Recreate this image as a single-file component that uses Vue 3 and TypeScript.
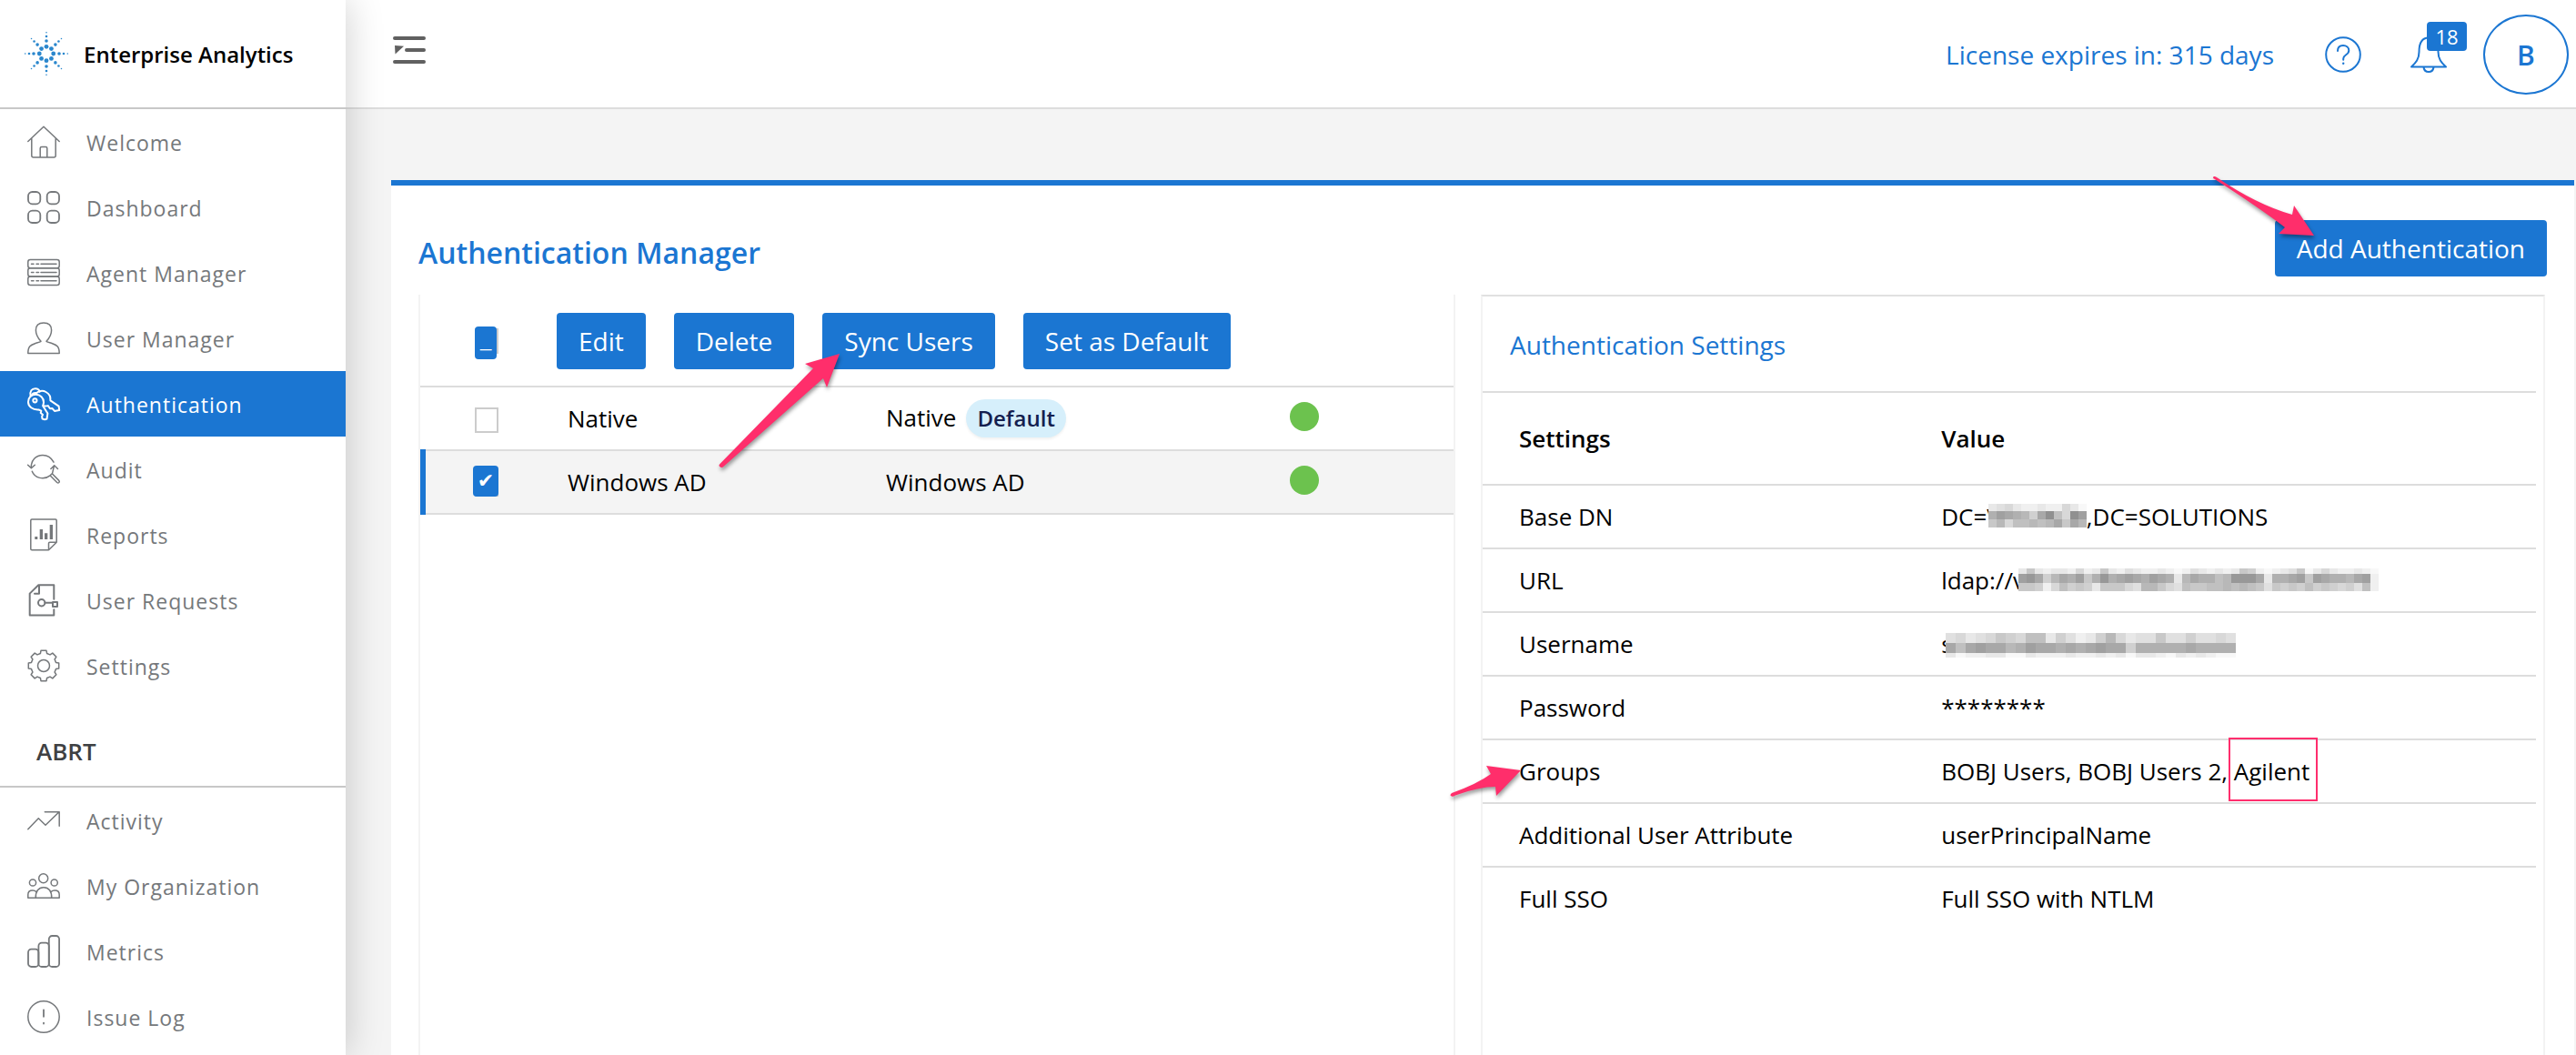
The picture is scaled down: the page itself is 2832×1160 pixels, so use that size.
<script setup lang="ts">
import { ref } from 'vue'

interface NavItem {
  label: string
  icon: string
}

interface Provider {
  name: string
  type: string
  isDefault: boolean
  selected: boolean
}

interface Mosaic {
  cell: number
  heights: number[]
  rows: string[]
}

interface Setting {
  label: string
  before?: string
  mosaic?: string
  after?: string
  highlight?: string
}

function gearPath(): string {
  const points: string[] = []
  for (let k = 0; k < 8; k++) {
    const steps: [number, number][] = [[-15, 14], [-10, 17], [10, 17], [15, 14]]
    for (const [offset, radius] of steps) {
      const angle = ((k * 45 + offset) * Math.PI) / 180
      points.push(`${(18 + radius * Math.sin(angle)).toFixed(1)} ${(18 - radius * Math.cos(angle)).toFixed(1)}`)
    }
  }
  return `M${points.join('L')}Z`
}

const mainNav: NavItem[] = [
  {
    label: 'Welcome',
    icon: '<path d="M.8 17.5 18 1.2l17.2 16.3M4.8 14v19q0 2 2 2h22.4q2 0 2-2V14M14.2 35V25q0-1.600 1.600-1.600h4.400q1.600 0 1.600 1.600v10"/>',
  },
  {
    label: 'Dashboard',
    icon: '<g stroke-width="1.800"><rect x="1" y="1" width="13.300" height="13.300" rx="4.500"/><rect x="21.700" y="1" width="13.300" height="13.300" rx="4.500"/><rect x="1" y="21.700" width="13.300" height="13.300" rx="4.500"/><rect x="21.700" y="21.700" width="13.300" height="13.300" rx="4.500"/></g>',
  },
  {
    label: 'Agent Manager',
    icon: '<rect x=".8" y="3.500" width="34.400" height="9.300" rx="2.500"/><rect x=".8" y="12.800" width="34.400" height="9.300" rx="2.500"/><rect x=".8" y="22.100" width="34.400" height="9.300" rx="2.500"/><path d="M4.500 8.300h2.500M10 8.300h2.500M15 8.300h17M4.500 17.600h2.500M10 17.600h2.500M15 17.600h17M4.500 26.700h2.500M10 26.700h2.500M15 26.700h17"/>',
  },
  {
    label: 'User Manager',
    icon: '<path d="M.8 34.600C.8 27 3 25.600 9 23.500c3.500-1.100 5-1.500 6-2.200C11 17 9.400 13 9.400 9 9.400 3.700 13 1 18 1s8.600 2.700 8.600 8c0 4-1.600 8-5.600 12.300 1 .7 2.500 1.100 6 2.200 6 2.100 8.200 3.500 8.200 11.100z"/>',
  },
  {
    label: 'Authentication',
    icon: '<g stroke-width="2"><path d="M3.600 9.500C2.500 4 5 1.200 8.700 1.200c2.800 0 4.600 1.600 4.800 3.600"/><path d="M5 8.200c1-2.300 3-2.500 5-2.200"/><path d="M12.500 24.500C6 25 1 21 1 16S4.500 7.800 9.300 7.800c5 0 8.700 3.700 8.700 8.400 0 1.700-.4 2.800-.9 4l5.300 8.300-.9 6.200q-2.500 1.300-5-.4l-.4-2.400 1-2-2.400-2 .6-2.200z"/><circle cx="8.400" cy="14.300" r="2.100"/><path d="M9.700 6.600C12 3.700 17 3 20.500 5c4 2.200 5.300 6 4.900 9.300l9.200 6.300.6 4.500-5.200.8-2.600-2.900-2.400.3-2.200-3.200q-2.500.8-5 .1"/></g>',
  },
  {
    label: 'Audit',
    icon: '<path d="M4.300 16.500C4 8 9.500 2.500 17 2.500c5.500 0 9.500 3 12 7.700M.6 13.200l3.800 3.600 3.900-3.600M5.300 20.300C8 27.500 18 30.500 25 24.800l2.500-2.200 2-8.500M25.900 17.500l3.800-3.700 3.800 3.700M25 24.800l7.700 7.700q1.200.9 2.100 0 .9-1.100 0-2.100l-7.500-7.600z"/>',
  },
  {
    label: 'Reports',
    icon: '<path d="M23.500 34.700H5q-1.200 0-1.200-1.200V2.200Q3.800 1 5 1h26q1.200 0 1.200 1.200v24l-8.700 8.500v-7.300q0-1.200 1.200-1.200h7.500"/><path class="solid" d="M8.300 20h3v3h-3zM13.700 12H17v11h-3.300zM19 16.300h3.300V23H19zM24.700 7H28v16h-3.300z"/>',
  },
  {
    label: 'User Requests',
    icon: '<g stroke-width="2"><path d="M29.300 16.700V1.200h-17L2.700 10.600v24h26.600v-6.300M13 1.500v9.200H8"/><circle cx="15.700" cy="20.700" r="3.700"/><path d="M19.500 20.700H28M28 20h5v5h-5z"/></g>',
  },
  {
    label: 'Settings',
    icon: `<path d="${gearPath()}"/><circle cx="18" cy="18" r="6.500"/>`,
  },
]

const orgNav: NavItem[] = [
  { label: 'Activity', icon: '<path d="M.8 27.700 12.300 15.800l7.700 7.500L35 8.800M19.300 8.700h15.900v15.600"/>' },
  {
    label: 'My Organization',
    icon: '<circle cx="17.700" cy="9.700" r="5"/><circle cx="6" cy="14.500" r="3.600"/><circle cx="29.700" cy="14.500" r="3.600"/><path d="M.8 31.200h34.400v-3.500c0-3-2-4.700-5-4.700-2 0-3 .4-4.200 1.700M.8 31.200v-3.500c0-3 2-4.700 5-4.700 2 0 3 .4 4.200 1.700M9.300 31.200c-.3-7.200 3-11.500 8.700-11.500s9 4.300 8.700 11.500"/>',
  },
  {
    label: 'Metrics',
    icon: '<g stroke-width="1.800"><rect x="1" y="15.700" width="11.400" height="19.300" rx="3.500"/><rect x="12.400" y="8.700" width="11.400" height="26.300" rx="3.500"/><rect x="23.800" y="1" width="11.300" height="34" rx="3.500"/></g>',
  },
  {
    label: 'Issue Log',
    icon: '<circle cx="18" cy="18" r="17.200"/><path stroke-width="1.800" d="M18 10.300v7.500M18 24.600v1"/>',
  },
]

const activeItem = ref('Authentication')

const logoDots = Array.from({ length: 8 }, (_, arm) => arm * (Math.PI / 4)).flatMap((angle) =>
  [[7.7, 2.4], [14, 1.8], [19, 1.3], [23.3, 0.8]].map(([distance, r]) => ({
    cx: 25 + distance * Math.cos(angle),
    cy: 25 + distance * Math.sin(angle),
    r,
  })),
)

const providers = ref<Provider[]>([
  { name: 'Native', type: 'Native', isDefault: true, selected: false },
  { name: 'Windows AD', type: 'Windows AD', isDefault: false, selected: true },
])

// Each hex digit is one tile's grey level, from dark (0) to nearly white (f).
const mosaics: Record<string, Mosaic> = {
  domain: {
    cell: 9,
    heights: [8, 9, 9],
    rows: ['dcbdeedeebdf', '64567a528b24', '97b887875957'],
  },
  host: {
    cell: 9,
    heights: [6, 10, 9],
    rows: [
      'd9deddebed9decdeedefecdeded9aefedc9fdbdeedef',
      '435a756496365456456d7566873335d665494566754e',
      '99aeb8a9ad999bc779bc8998878789c9a9a8a9abac8e',
    ],
  },
  account: {
    cell: 11,
    heights: [11, 11, 5],
    rows: ['cbdcb9ab88daceda7bdcc9ccaccbc', '585455764556565455a6666656666', 'dfeeddffdeeedeededfddefdedeff'],
  },
}

function shade(digit: string): string {
  const level = 128 + parseInt(digit, 16) * 8
  return `rgb(${level},${level},${level})`
}

function rowTop(mosaic: Mosaic, row: number): number {
  return mosaic.heights.slice(0, row).reduce((sum, h) => sum + h, 0)
}

const settings: Setting[] = [
  { label: 'Base DN', before: 'DC=V', mosaic: 'domain', after: ',DC=SOLUTIONS' },
  { label: 'URL', before: 'ldap://v', mosaic: 'host' },
  { label: 'Username', before: 's', mosaic: 'account' },
  { label: 'Password', before: '********' },
  { label: 'Groups', before: 'BOBJ Users, BOBJ Users 2, ', highlight: 'Agilent' },
  { label: 'Additional User Attribute', before: 'userPrincipalName' },
  { label: 'Full SSO', before: 'Full SSO with NTLM' },
]
</script>

<template>
  <div class="app">
    <aside class="sidebar">
      <div class="brand">
        <svg class="logo" viewBox="0 0 50 50" aria-hidden="true">
          <circle v-for="(dot, i) in logoDots" :key="i" :cx="dot.cx" :cy="dot.cy" :r="dot.r" />
        </svg>
        <span>Enterprise Analytics</span>
      </div>
      <nav>
        <a
          v-for="item in mainNav"
          :key="item.label"
          href="#"
          class="nav-item"
          :class="{ active: item.label === activeItem }"
          @click.prevent="activeItem = item.label"
        >
          <svg class="nav-icon" viewBox="0 0 36 36" aria-hidden="true" v-html="item.icon"></svg>
          <span class="nav-label">{{ item.label }}</span>
        </a>
      </nav>
      <h2 class="nav-heading">ABRT</h2>
      <nav>
        <a
          v-for="item in orgNav"
          :key="item.label"
          href="#"
          class="nav-item"
          :class="{ active: item.label === activeItem }"
          @click.prevent="activeItem = item.label"
        >
          <svg class="nav-icon" viewBox="0 0 36 36" aria-hidden="true" v-html="item.icon"></svg>
          <span class="nav-label">{{ item.label }}</span>
        </a>
      </nav>
    </aside>

    <div class="page">
      <header class="topbar">
        <button class="icon-button menu" type="button" aria-label="Toggle menu">
          <svg viewBox="0 0 36 32" width="36" height="32">
            <path d="M2 2h32M15 15h19M2 28h32" />
            <path class="solid" d="M2 10l10 .700L2.500 19.500z" />
          </svg>
        </button>
        <div class="topbar-right">
          <span class="license">License expires in: 315 days</span>
          <button class="icon-button" type="button" aria-label="Help">
            <svg viewBox="0 0 40 40" width="40" height="40">
              <circle cx="20" cy="20" r="18.800" />
              <path d="M14 16c0-4 2.500-6 6-6s6.300 2.300 6.300 5.500c0 5-6.100 4.500-6.100 9v1.300" />
              <circle class="solid" cx="20.200" cy="29.800" r="1.200" />
            </svg>
          </button>
          <button class="icon-button bell" type="button" aria-label="Notifications">
            <svg viewBox="0 0 40 40" width="40" height="40">
              <path d="M1 33.500C6 29 9.500 25 9.500 17 9.500 8 12 1.500 20 1.500S30.500 8 30.500 17c0 8 3.500 12 8.500 16.500zM14.500 34c.5 3.500 2.500 5 5.500 5s5-1.500 5.500-5" />
            </svg>
            <span class="badge">18</span>
          </button>
          <button class="avatar" type="button" aria-label="Account">B</button>
        </div>
      </header>

      <main class="card">
        <div class="card-head">
          <h1>Authentication Manager</h1>
          <div class="anchor">
            <button class="btn" type="button">Add Authentication</button>
            <svg class="arrow arrow-add" viewBox="0 0 116 74" aria-hidden="true">
              <path d="M3 4.500Q1 3 3 2Q4 1.500 6 3Q50 33 89 44L91 34 113 67 74 65 81 58Q55 38 3 4.500z" />
            </svg>
          </div>
        </div>

        <div class="panels">
          <section class="panel">
            <table class="providers">
              <colgroup>
                <col class="col-check" />
                <col class="col-name" />
                <col />
                <col class="col-status" />
              </colgroup>
              <thead>
                <tr>
                  <th class="check-cell">
                    <input type="checkbox" class="check" aria-label="Select all" :indeterminate.prop="true" />
                  </th>
                  <th colspan="3">
                    <div class="toolbar">
                      <button class="btn" type="button">Edit</button>
                      <button class="btn" type="button">Delete</button>
                      <div class="anchor">
                        <button class="btn" type="button">Sync Users</button>
                        <svg class="arrow arrow-sync" viewBox="0 0 142 132" aria-hidden="true">
                          <path d="M4 127.500Q1 126 4 123.500L106 19 97 14 135 3 121 40 117 30 8 126.500Q5.500 129 4 127.500z" />
                        </svg>
                      </div>
                      <button class="btn" type="button">Set as Default</button>
                    </div>
                  </th>
                </tr>
              </thead>
              <tbody>
                <tr v-for="provider in providers" :key="provider.name" :class="{ selected: provider.selected }">
                  <td class="check-cell">
                    <input v-model="provider.selected" type="checkbox" class="check" :aria-label="provider.name" />
                  </td>
                  <td>{{ provider.name }}</td>
                  <td>
                    {{ provider.type }}<span v-if="provider.isDefault" class="pill">Default</span>
                  </td>
                  <td><span class="status" role="img" aria-label="Enabled"></span></td>
                </tr>
              </tbody>
            </table>
          </section>

          <section class="panel details">
            <h2 class="details-title">Authentication Settings</h2>
            <table class="settings">
              <thead>
                <tr>
                  <th class="setting-name">Settings</th>
                  <th>Value</th>
                </tr>
              </thead>
              <tbody>
                <tr v-for="setting in settings" :key="setting.label">
                  <td>
                    <span class="anchor">
                      {{ setting.label }}
                      <svg v-if="setting.highlight" class="arrow arrow-groups" viewBox="0 0 86 42" aria-hidden="true">
                        <path d="M4 37.500Q1 36.500 4 34Q32 24 47 13L42 4 80 9 53 37 52 27Q34 27 8 36.500Q5 38.500 4 37.500z" />
                      </svg>
                    </span>
                  </td>
                  <td>
                    {{ setting.before }}<svg
                      v-if="setting.mosaic"
                      class="mosaic"
                      :class="setting.mosaic"
                      :width="mosaics[setting.mosaic].cell * mosaics[setting.mosaic].rows[0].length"
                      :height="rowTop(mosaics[setting.mosaic], 3)"
                      shape-rendering="crispEdges"
                      aria-label="Redacted"
                    >
                      <g v-for="(row, r) in mosaics[setting.mosaic].rows" :key="r">
                        <rect
                          v-for="(digit, c) in row.split('')"
                          :key="c"
                          :x="c * mosaics[setting.mosaic].cell"
                          :y="rowTop(mosaics[setting.mosaic], r)"
                          :width="mosaics[setting.mosaic].cell"
                          :height="mosaics[setting.mosaic].heights[r]"
                          :fill="shade(digit)"
                        />
                      </g></svg>{{ setting.after }}<span v-if="setting.highlight" class="highlight">{{ setting.highlight }}</span>
                  </td>
                </tr>
              </tbody>
            </table>
          </section>
        </div>
      </main>
    </div>
  </div>
</template>

<style>
body {
  margin: 0;
  background: #f4f4f4;
}
</style>

<style scoped>
.app {
  display: flex;
  min-height: 100vh;
  font-family: "Open Sans", "Noto Sans", sans-serif;
  font-size: 26px;
  color: #000;
  background: #f4f4f4;
}

.app *,
.app *::before,
.app *::after {
  box-sizing: border-box;
}

h1,
h2 {
  margin: 0;
}

button {
  font-family: inherit;
  cursor: pointer;
}

.sidebar {
  flex: 0 0 380px;
  position: relative;
  z-index: 1;
  background: #fff;
  box-shadow: 0 0 40px rgba(0, 0, 0, 0.2);
}

.brand {
  display: flex;
  align-items: center;
  gap: 16px;
  height: 120px;
  padding-left: 26px;
  border-bottom: 2px solid #c8c8c8;
  font-size: 24px;
  font-weight: 600;
}

.logo {
  width: 50px;
  height: 50px;
  fill: #2a87cd;
}

.nav-item {
  display: flex;
  align-items: center;
  gap: 29px;
  height: 72px;
  padding-left: 30px;
  color: #75787b;
  font-size: 23px;
  letter-spacing: 1px;
  text-decoration: none;
}

.nav-label {
  padding-top: 2px;
}

.nav-item.active {
  background: #1b76d2;
  color: #fff;
}

.nav-icon {
  width: 36px;
  height: 36px;
  overflow: visible;
  fill: none;
  stroke: currentColor;
  stroke-width: 1.5;
  stroke-linecap: round;
  stroke-linejoin: round;
}

.nav-icon :deep(.solid) {
  fill: currentColor;
  stroke: none;
}

.nav-heading {
  height: 98px;
  padding: 30px 0 0 40px;
  border-bottom: 2px solid #c8c8c8;
  color: #3f4143;
  font-size: 26px;
  font-weight: 600;
  line-height: 56px;
}

.page {
  flex: 1;
  min-width: 0;
  display: flex;
  flex-direction: column;
}

.topbar {
  display: flex;
  align-items: center;
  justify-content: space-between;
  height: 120px;
  padding: 2px 8px 0 52px;
  background: #fff;
  border-bottom: 2px solid #ddd;
}

.topbar-right {
  display: flex;
  align-items: center;
  color: #1b76d2;
}

.icon-button {
  position: relative;
  display: flex;
  padding: 0;
  border: 0;
  background: none;
  color: inherit;
}

.icon-button svg {
  fill: none;
  stroke: currentColor;
  stroke-width: 2;
  stroke-linecap: round;
  stroke-linejoin: round;
}

.icon-button .solid {
  fill: currentColor;
  stroke: none;
}

.menu {
  margin-bottom: 8px;
  color: #606060;
}

.menu svg {
  stroke-width: 4;
}

.license {
  margin-right: 56px;
  font-size: 28px;
}

.bell {
  margin: 0 40px 0 54px;
}

.badge {
  position: absolute;
  top: -16px;
  left: 18px;
  width: 44px;
  height: 32px;
  border-radius: 4px;
  background: #1b76d2;
  color: #fff;
  font-size: 22px;
  line-height: 32px;
  text-align: center;
}

.avatar {
  width: 94px;
  height: 88px;
  padding: 0;
  border: 2px solid #1b76d2;
  border-radius: 50%;
  background: #fff;
  color: #1b76d2;
  font-size: 30px;
  font-weight: 600;
}

.card {
  flex: 1;
  display: flex;
  flex-direction: column;
  margin: 78px 2px 0 50px;
  padding: 38px 30px 0;
  border-top: 6px solid #1b76d2;
  background: #fff;
}

.card-head {
  display: flex;
  align-items: center;
  justify-content: space-between;
  margin-bottom: 20px;
}

h1 {
  padding-top: 10px;
  color: #1b76d2;
  font-size: 32px;
  font-weight: 600;
  line-height: 40px;
}

.anchor {
  position: relative;
}

.btn {
  display: block;
  height: 62px;
  padding: 0 24px;
  border: 0;
  border-radius: 4px;
  background: #1b76d2;
  color: #fff;
  font-size: 28px;
  white-space: nowrap;
}

.panels {
  flex: 1;
  display: grid;
  grid-template-columns: 1140fr 1170fr;
  gap: 28px;
  margin-right: 2px;
}

.panel {
  min-width: 0;
  padding-top: 2px;
  border: solid #f3f3f3;
  border-width: 0 2px;
}

.details {
  padding: 0 8px 0 0;
  border-top: 2px solid #e1e1e1;
}

table {
  width: 100%;
  border-collapse: separate;
  border-spacing: 0;
  table-layout: fixed;
}

th,
td {
  border-bottom: 2px solid #ddd;
  text-align: left;
}

td {
  height: 70px;
  padding: 0 0 0 30px;
}

.col-check {
  width: 132px;
}

.col-name {
  width: 350px;
}

.col-status {
  width: 210px;
}

.providers th {
  height: 100px;
  padding: 0 0 0 18px;
  font-weight: 400;
}

.providers .check-cell {
  position: relative;
  padding-left: 60px;
}

.toolbar {
  display: flex;
  gap: 31px;
}

.check {
  appearance: none;
  position: relative;
  display: block;
  width: 26px;
  height: 28px;
  margin: 0;
  border: 2px solid #ccc;
  background: #fff;
}

td .check {
  margin-top: 4px;
}

.check:indeterminate::after,
.check:checked::after {
  position: absolute;
  border-radius: 4px;
  background: #1b76d2;
  color: #fff;
  text-align: center;
}

.check:indeterminate::after {
  content: "_";
  top: -4px;
  left: -2px;
  width: 24px;
  height: 36px;
  font-size: 22px;
  line-height: 30px;
}

.check:checked::after {
  content: "✔";
  top: -8px;
  left: -4px;
  width: 28px;
  height: 34px;
  font-family: "DejaVu Sans", sans-serif;
  font-size: 22px;
  line-height: 34px;
}

.selected td {
  background: #f4f4f4;
}

.selected .check-cell::before {
  content: "";
  position: absolute;
  top: -2px;
  bottom: -2px;
  left: 0;
  width: 6px;
  background: #1b76d2;
}

.pill {
  display: inline-block;
  margin-left: 11px;
  padding: 0 12px;
  border-radius: 21px;
  background: #d6effb;
  box-shadow: 0 2px 3px rgba(0, 0, 0, 0.06);
  color: #14204f;
  font-size: 24px;
  font-weight: 600;
  line-height: 42px;
}

.status {
  display: block;
  width: 32px;
  height: 32px;
  margin-bottom: 4px;
  border-radius: 50%;
  background: #6cc24e;
}

.details-title {
  height: 106px;
  padding-left: 30px;
  border-bottom: 2px solid #ddd;
  color: #1b76d2;
  font-size: 28px;
  font-weight: 400;
  line-height: 106px;
}

.settings th {
  height: 102px;
  padding: 0 0 0 40px;
  font-weight: 600;
}

.settings td {
  padding-left: 40px;
}

.settings th + th,
.settings td + td {
  padding-left: 41px;
}

.settings tr:last-child td {
  border-bottom-color: transparent;
}

.setting-name {
  width: 40%;
}

.mosaic {
  position: relative;
  vertical-align: -2px;
}

.mosaic.domain {
  margin-left: -14px;
}

.mosaic.host {
  margin-left: -7px;
}

.mosaic.account {
  margin-left: -8px;
  vertical-align: -5px;
}

.highlight {
  position: relative;
}

.highlight::after {
  content: "";
  position: absolute;
  inset: -19px -9px -15px -6px;
  border: 2px solid #ff2e6d;
}

.arrow {
  position: absolute;
  overflow: visible;
  fill: #ff2e6b;
  filter: drop-shadow(1px 3px 2px rgba(0, 0, 0, 0.4));
  pointer-events: none;
}

.arrow-add {
  top: -50px;
  left: -70px;
  width: 116px;
  height: 74px;
}

.arrow-sync {
  top: 42px;
  left: -116px;
  width: 142px;
  height: 132px;
}

.arrow-groups {
  top: 8px;
  left: -78px;
  width: 86px;
  height: 42px;
}
</style>
